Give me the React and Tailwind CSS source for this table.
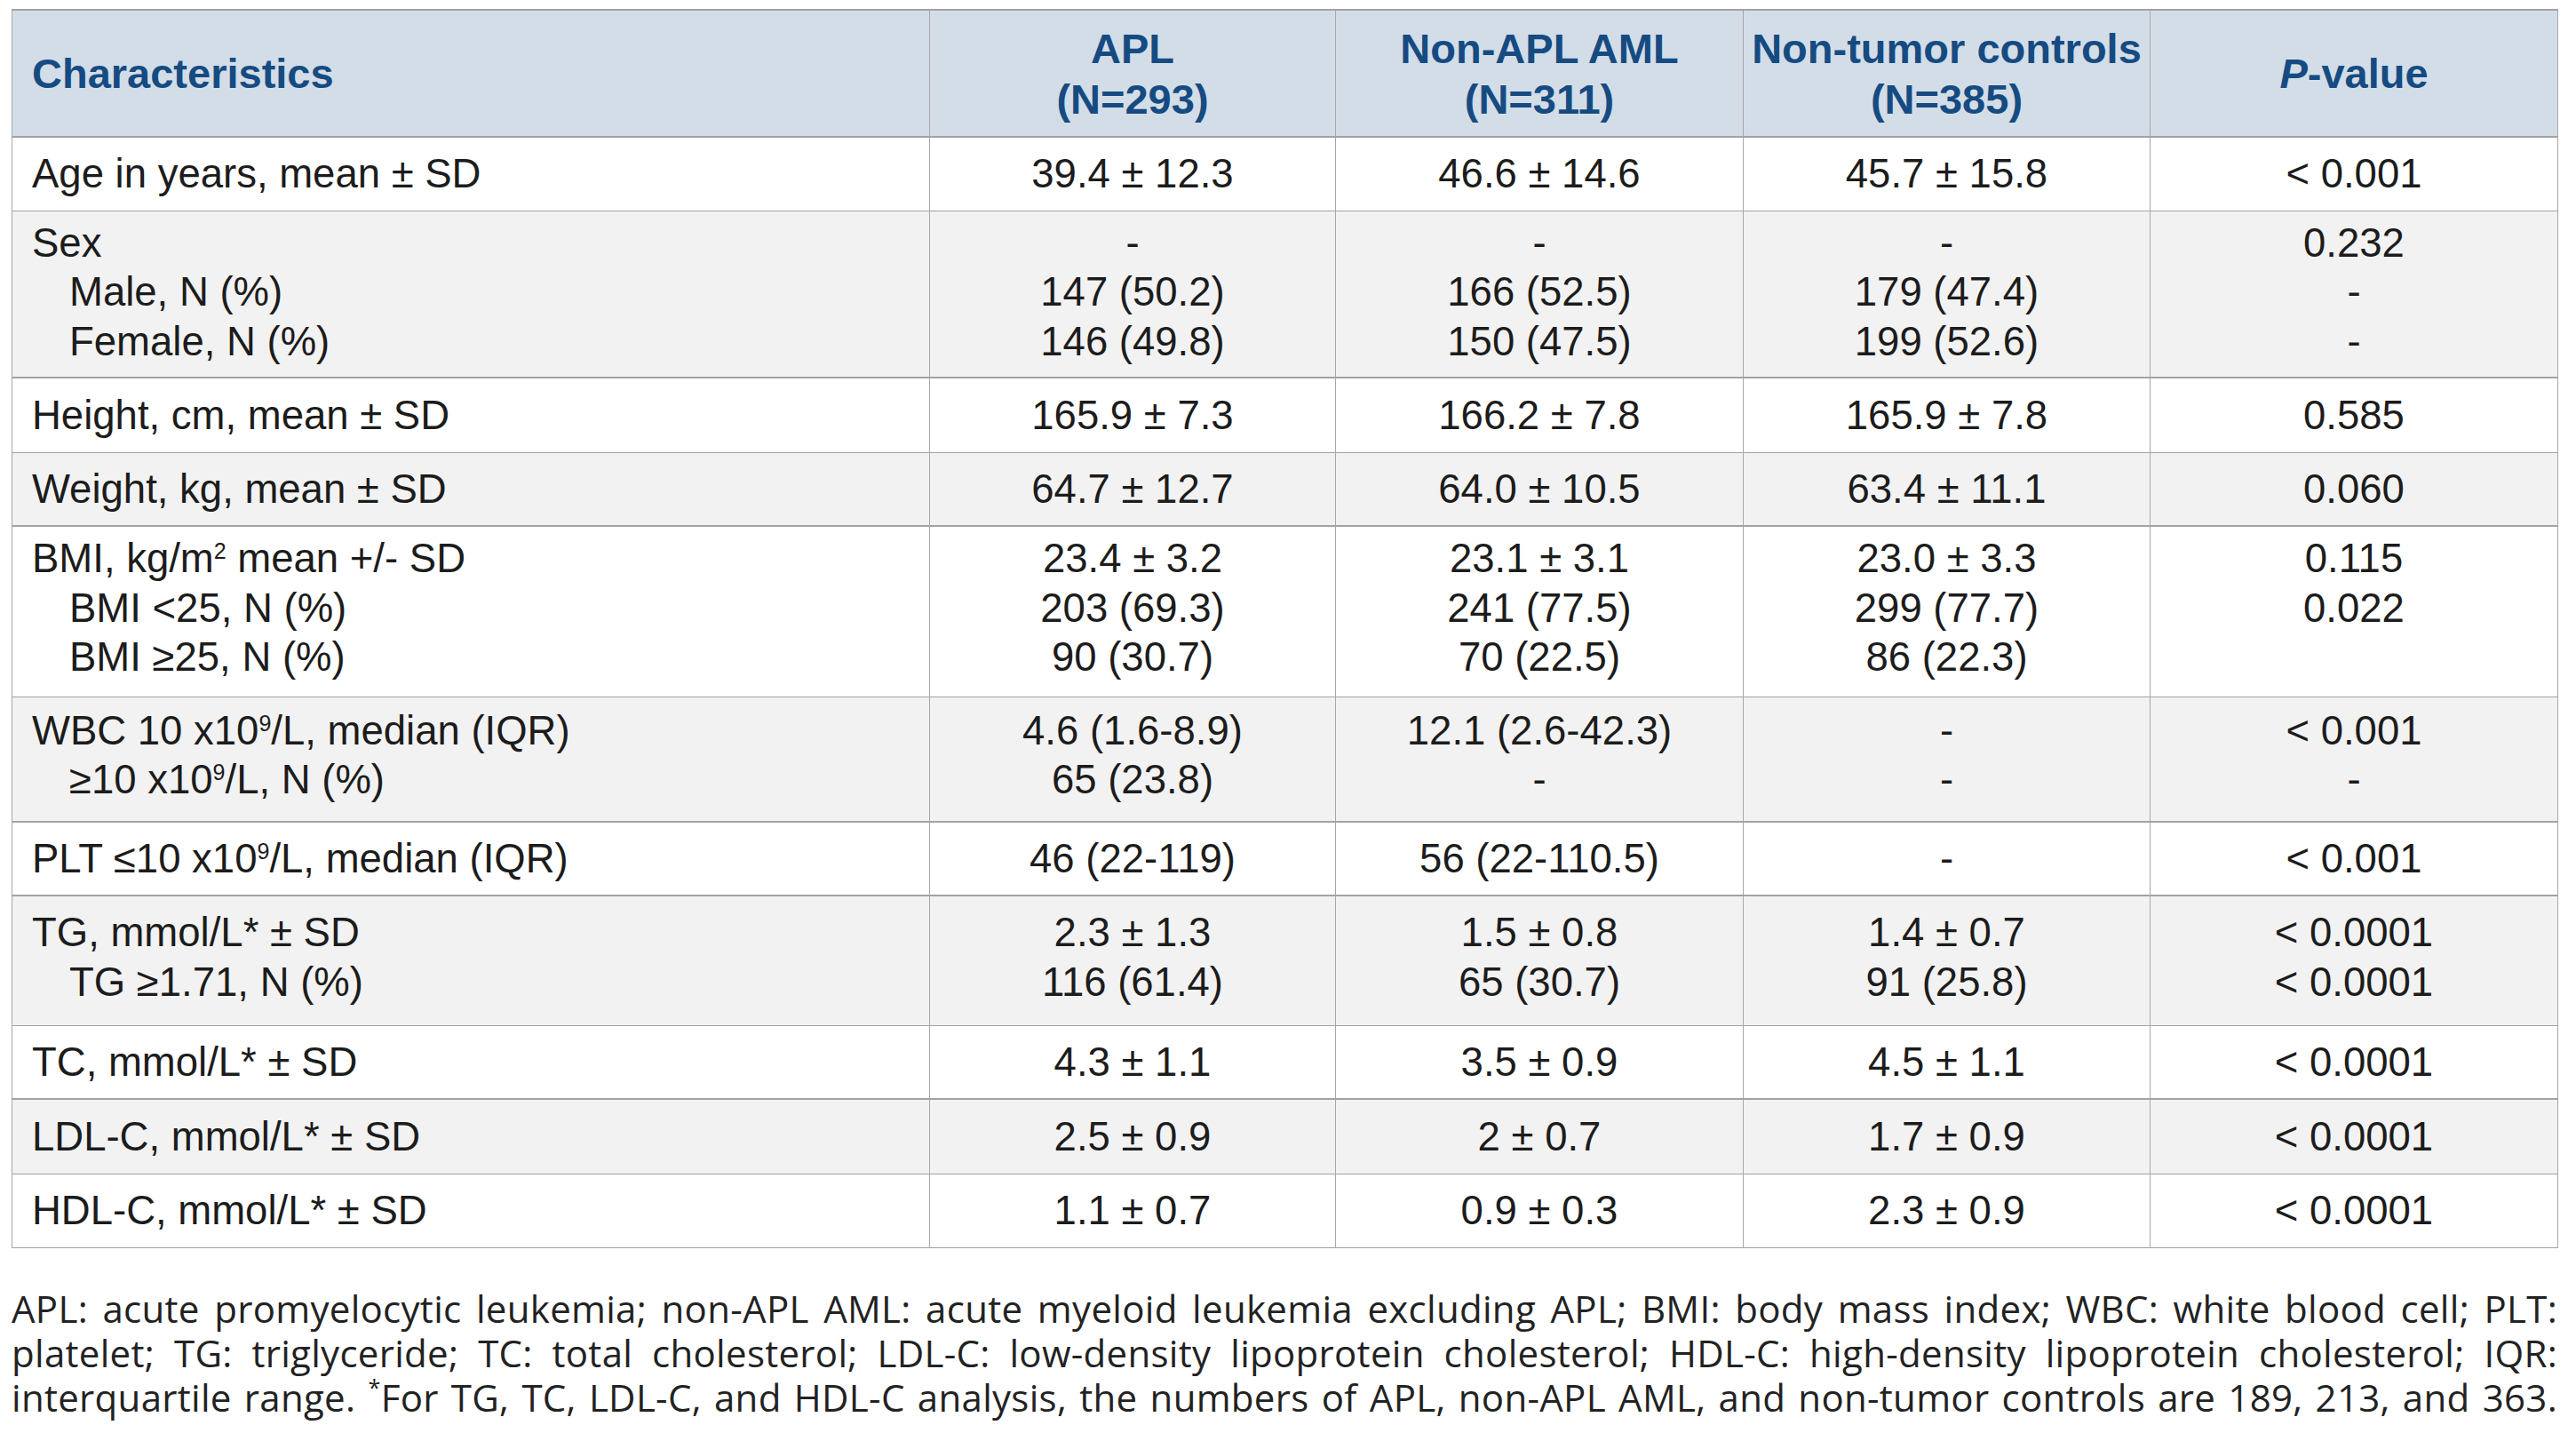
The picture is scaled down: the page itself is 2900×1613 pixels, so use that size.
import React from "react";

const sup = "text-[0.55em] -top-[0.6em]";

const rows = [
  { label: ["Age in years, mean ± SD"], apl: ["39.4 ± 12.3"], non: ["46.6 ± 14.6"], ctl: ["45.7 ± 15.8"], p: ["< 0.001"], h: "h-[83px]", bg: "bg-white", line: "border-b" },
  {
    label: ["Sex", "Male, N (%)", "Female, N (%)"],
    apl: ["-", "147 (50.2)", "146 (49.8)"],
    non: ["-", "166 (52.5)", "150 (47.5)"],
    ctl: ["-", "179 (47.4)", "199 (52.6)"],
    p: ["0.232", "-", "-"],
    h: "h-[188px]",
    pt: "pt-[8px]",
    bg: "bg-[#f2f2f2]",
    line: "border-b-2",
  },
  { label: ["Height, cm, mean ± SD"], apl: ["165.9 ± 7.3"], non: ["166.2 ± 7.8"], ctl: ["165.9 ± 7.8"], p: ["0.585"], h: "h-[84px]", bg: "bg-white", line: "border-b" },
  { label: ["Weight, kg, mean ± SD"], apl: ["64.7 ± 12.7"], non: ["64.0 ± 10.5"], ctl: ["63.4 ± 11.1"], p: ["0.060"], h: "h-[83px]", bg: "bg-[#f2f2f2]", line: "border-b-2" },
  {
    label: [
      <>BMI, kg/m<sup className={sup}>2</sup> mean +/- SD</>,
      "BMI <25, N (%)",
      "BMI ≥25, N (%)",
    ],
    apl: ["23.4 ± 3.2", "203 (69.3)", "90 (30.7)"],
    non: ["23.1 ± 3.1", "241 (77.5)", "70 (22.5)"],
    ctl: ["23.0 ± 3.3", "299 (77.7)", "86 (22.3)"],
    p: ["0.115", "0.022", ""],
    h: "h-[192px]",
    pt: "pt-[8px]",
    bg: "bg-white",
    line: "border-b",
  },
  {
    label: [
      <>WBC 10 x10<sup className={sup}>9</sup>/L, median (IQR)</>,
      <>≥10 x10<sup className={sup}>9</sup>/L, N (%)</>,
    ],
    apl: ["4.6 (1.6-8.9)", "65 (23.8)"],
    non: ["12.1 (2.6-42.3)", "-"],
    ctl: ["-", "-"],
    p: ["< 0.001", "-"],
    h: "h-[141px]",
    pt: "pt-[10px]",
    bg: "bg-[#f2f2f2]",
    line: "border-b-2",
  },
  {
    label: [<>PLT ≤10 x10<sup className={sup}>9</sup>/L, median (IQR)</>],
    apl: ["46 (22-119)"],
    non: ["56 (22-110.5)"],
    ctl: ["-"],
    p: ["< 0.001"],
    h: "h-[83px]",
    bg: "bg-white",
    line: "border-b-2",
  },
  {
    label: ["TG, mmol/L* ± SD", "TG ≥1.71, N (%)"],
    apl: ["2.3 ± 1.3", "116 (61.4)"],
    non: ["1.5 ± 0.8", "65 (30.7)"],
    ctl: ["1.4 ± 0.7", "91 (25.8)"],
    p: ["< 0.0001", "< 0.0001"],
    h: "h-[146px]",
    pt: "pt-[13px]",
    bg: "bg-[#f2f2f2]",
    line: "border-b",
  },
  { label: ["TC, mmol/L* ± SD"], apl: ["4.3 ± 1.1"], non: ["3.5 ± 0.9"], ctl: ["4.5 ± 1.1"], p: ["< 0.0001"], h: "h-[83px]", bg: "bg-white", line: "border-b-2" },
  { label: ["LDL-C, mmol/L* ± SD"], apl: ["2.5 ± 0.9"], non: ["2 ± 0.7"], ctl: ["1.7 ± 0.9"], p: ["< 0.0001"], h: "h-[84px]", bg: "bg-[#f2f2f2]", line: "border-b" },
  { label: ["HDL-C, mmol/L* ± SD"], apl: ["1.1 ± 0.7"], non: ["0.9 ± 0.3"], ctl: ["2.3 ± 0.9"], p: ["< 0.0001"], h: "h-[83px]", bg: "bg-white", line: "border-b" },
];

function Lines({ items, indent }) {
  return items.map((t, i) => (
    <div key={i} className={indent && i > 0 ? "pl-[42px] whitespace-nowrap" : "whitespace-nowrap"}>
      {t === "" ? "\u00a0" : t}
    </div>
  ));
}

export default function App() {
  return (
    <div className="bg-white w-[2900px] min-h-[1613px] pl-[13px] pt-[10px] text-[#1c1c1c]">
      <table className="border-collapse table-fixed w-[2866px] text-[45.5px] leading-[55.5px] [font-family:'Liberation_Sans',Arial,sans-serif]">
        <colgroup>
          <col className="w-[1033px]" />
          <col className="w-[457px]" />
          <col className="w-[459px]" />
          <col className="w-[458px]" />
          <col className="w-[459px]" />
        </colgroup>
        <thead>
          <tr className="h-[143px] bg-[#d3dde7] border-t-2 border-b-2 border-[#a2a2a2] text-[#164b82] font-bold text-[47px] leading-[57px]">
            <th className="border-x border-[#a8a8a8] text-left pl-[22px] font-bold">Characteristics</th>
            <th className="border-x border-[#a8a8a8] text-center font-bold">
              <div>APL</div>
              <div>(N=293)</div>
            </th>
            <th className="border-x border-[#a8a8a8] text-center font-bold">
              <div>Non-APL AML</div>
              <div>(N=311)</div>
            </th>
            <th className="border-x border-[#a8a8a8] text-center font-bold whitespace-nowrap">
              <div>Non-tumor controls</div>
              <div>(N=385)</div>
            </th>
            <th className="border-x border-[#a8a8a8] text-center font-bold">
              <i>P</i>-value
            </th>
          </tr>
        </thead>
        <tbody>
          {rows.map((r, idx) => {
            const align = r.pt ? `align-top ${r.pt}` : "align-middle";
            return (
              <tr key={idx} className={`${r.h} ${r.bg} ${r.line} border-[#a2a2a2]`}>
                <td className={`border-x border-[#a8a8a8] pl-[22px] ${align}`}>
                  <Lines items={r.label} indent />
                </td>
                <td className={`border-x border-[#a8a8a8] text-center ${align}`}>
                  <Lines items={r.apl} />
                </td>
                <td className={`border-x border-[#a8a8a8] text-center ${align}`}>
                  <Lines items={r.non} />
                </td>
                <td className={`border-x border-[#a8a8a8] text-center ${align}`}>
                  <Lines items={r.ctl} />
                </td>
                <td className={`border-x border-[#a8a8a8] text-center ${align}`}>
                  <Lines items={r.p} />
                </td>
              </tr>
            );
          })}
        </tbody>
      </table>

      <div className="w-[2866px] mt-[43px] [font-family:'Open_Sans','Noto_Sans',sans-serif] text-[42px] tracking-[0.3px] leading-[50px] text-[#222]">
        <div className="text-justify [text-align-last:justify]">
          APL: acute promyelocytic leukemia; non-APL AML: acute myeloid leukemia excluding APL; BMI: body mass index; WBC: white blood cell; PLT:
        </div>
        <div className="text-justify [text-align-last:justify]">
          platelet; TG: triglyceride; TC: total cholesterol; LDL-C: low-density lipoprotein cholesterol; HDL-C: high-density lipoprotein cholesterol; IQR:
        </div>
        <div className="text-justify [text-align-last:justify]">
          interquartile range. <sup className="text-[0.6em] -top-[0.7em]">*</sup>For TG, TC, LDL-C, and HDL-C analysis, the numbers of APL, non-APL AML, and non-tumor controls are 189, 213, and 363.
        </div>
      </div>
    </div>
  );
}
